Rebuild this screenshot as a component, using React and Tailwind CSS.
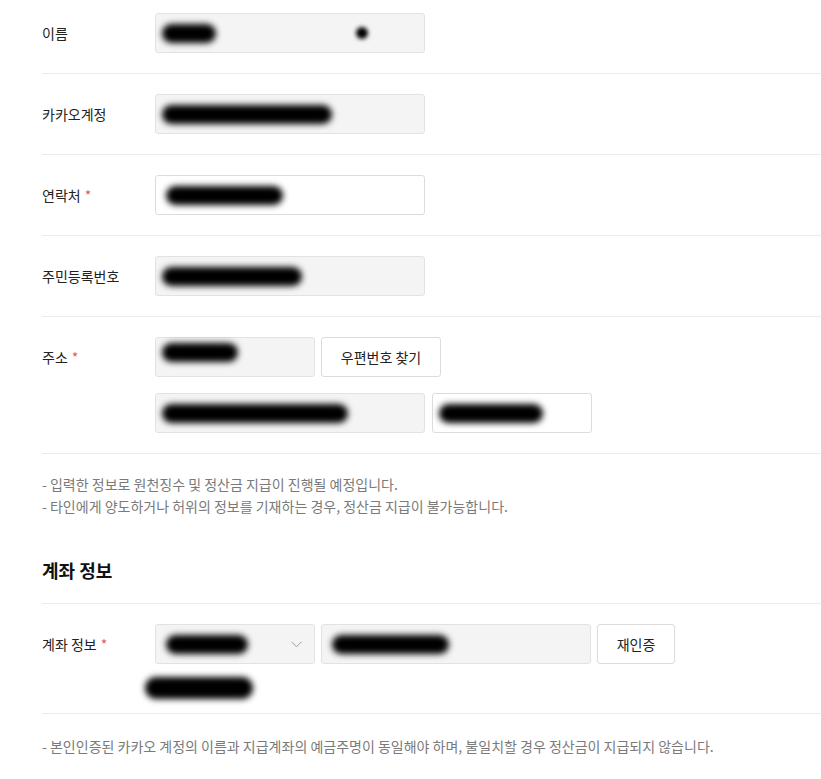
const font = { fontFamily: '"Noto Sans CJK KR", "Noto Sans", sans-serif' };

function Blob({ className = '' }) {
  return <span className={`block h-[19px] shrink-0 rounded-full bg-black blur-[3px] ${className}`} />;
}

function Field({ white = false, className = 'w-[270px]', children }) {
  return (
    <div
      className={`flex h-10 items-center rounded-[3px] border px-[6px] ${white ? 'border-[#dcdcdc] bg-white' : 'border-[#e2e2e2] bg-[#f4f4f4]'} ${className}`}
    >
      {children}
    </div>
  );
}

function Label({ text, required }) {
  return (
    <div className="flex h-10 w-[113px] shrink-0 items-center text-[14px] text-[#222]">
      {text}
      {required ? <span className="ml-1 text-[#e05a5a]">*</span> : null}
    </div>
  );
}

function Row({ label, required, children, last }) {
  return (
    <div className={`flex py-5 ${last ? '' : 'border-b border-[#ebebeb]'}`}>
      <Label text={label} required={required} />
      <div className="flex flex-col">{children}</div>
    </div>
  );
}

function Button({ children, className = '' }) {
  return (
    <button type="button" className={`h-10 rounded-[3px] border border-[#dcdcdc] bg-white text-[14px] text-[#222] ${className}`}>
      {children}
    </button>
  );
}

export default function App() {
  return (
    <div style={font} className="min-h-[779px] bg-white pl-[42px]">
      <div className="-mt-[7px]">
        <div className="border-b border-[#ebebeb]">
          <Row label="이름" last>
            <Field>
              <Blob className="w-[54px]" />
              <span className="ml-[140px] block h-[12px] w-[12px] rounded-full bg-black blur-[2px]" />
            </Field>
          </Row>
        </div>
        <Row label="카카오계정">
          <Field>
            <Blob className="w-[170px]" />
          </Field>
        </Row>
        <Row label="연락처" required>
          <Field white>
            <Blob className="ml-1 w-[117px]" />
          </Field>
        </Row>
        <Row label="주민등록번호">
          <Field>
            <Blob className="w-[140px]" />
          </Field>
        </Row>
        <Row label="주소" required>
          <div className="flex gap-[6px]">
            <Field className="w-[160px]">
              <Blob className="-mt-[10px] w-[76px]" />
            </Field>
            <Button className="w-[120px]">우편번호 찾기</Button>
          </div>
          <div className="mt-4 flex gap-[7px]">
            <Field>
              <Blob className="w-[186px]" />
            </Field>
            <Field white className="w-[160px]">
              <Blob className="w-[104px]" />
            </Field>
          </div>
        </Row>
      </div>

      <div className="pt-[19px] text-[14px] leading-[22px] text-[#7a7a7a]">
        <p>- 입력한 정보로 원천징수 및 정산금 지급이 진행될 예정입니다.</p>
        <p>- 타인에게 양도하거나 허위의 정보를 기재하는 경우, 정산금 지급이 불가능합니다.</p>
      </div>

      <h2 className="mt-[40px] border-b border-[#ebebeb] pb-[20px] text-[18px] font-bold leading-[26px] text-[#111]">계좌 정보</h2>

      <div className="border-b border-[#ebebeb] pt-5 pb-[13px]">
        <div className="flex">
          <Label text="계좌 정보" required />
          <div className="flex gap-[6px]">
            <Field className="w-[160px] justify-between pr-3">
              <Blob className="ml-1 w-[82px]" />
              <svg width="11" height="7" viewBox="0 0 11 7" fill="none" stroke="#999" strokeWidth="1">
                <path d="M0.5 0.8L5.5 5.8L10.5 0.8" />
              </svg>
            </Field>
            <Field className="w-[270px]">
              <Blob className="ml-1 w-[117px]" />
            </Field>
            <Button className="w-[78px]">재인증</Button>
          </div>
        </div>
        <div className="mt-[12px] flex h-[24px] items-center pl-[103px]">
          <Blob className="h-[22px] w-[108px]" />
        </div>
      </div>

      <p className="pt-[21px] text-[14px] leading-[22px] text-[#7a7a7a]">
        - 본인인증된 카카오 계정의 이름과 지급계좌의 예금주명이 동일해야 하며, 불일치할 경우 정산금이 지급되지 않습니다.
      </p>
    </div>
  );
}
